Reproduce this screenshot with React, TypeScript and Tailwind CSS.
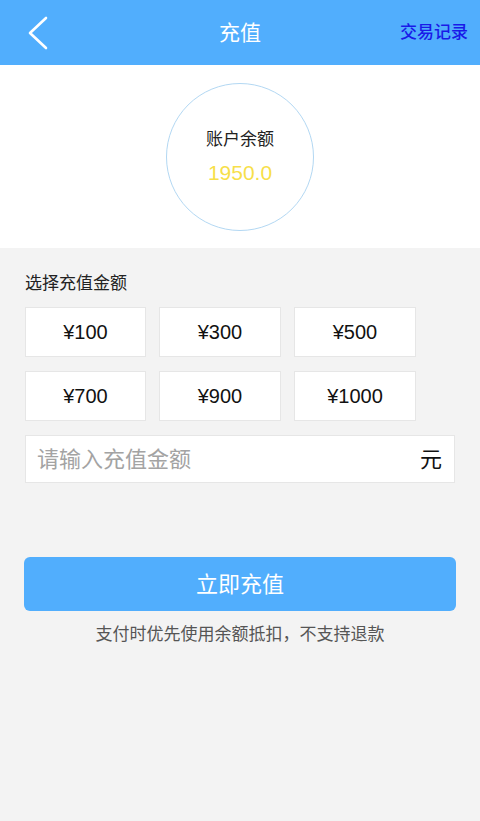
const amounts = ["¥100", "¥300", "¥500", "¥700", "¥900", "¥1000"];

export default function App() {
  const font = { fontFamily: '"Liberation Sans", "Noto Sans CJK SC", sans-serif' };
  return (
    <div className="w-[480px] h-[821px] bg-[#f3f3f3] flex flex-col" style={font}>
      <header className="h-[65px] bg-[#51aefd] grid grid-cols-[minmax(0,1fr)_auto_minmax(0,1fr)] items-center px-[12px]">
        <svg width="22" height="34" viewBox="0 0 22 34" fill="none" className="text-white ml-[15px]">
          <path d="M19 2 L3 17 L19 32" stroke="currentColor" strokeWidth="2.6" strokeLinecap="round" strokeLinejoin="round" />
        </svg>
        <h1 className="text-[21px] text-white">充值</h1>
        <span className="justify-self-end text-[17px] text-[#1a1ae8] font-medium">交易记录</span>
      </header>

      <section className="h-[183px] bg-white flex items-center justify-center">
        <div className="w-[148px] h-[148px] rounded-full border border-[#b3d8f3] flex flex-col items-center justify-center gap-[4px] pt-[2px]">
          <span className="text-[17px] text-[#222]">账户余额</span>
          <span className="text-[21px] text-[#f7df4a]">1950.0</span>
        </div>
      </section>

      <div className="px-[25px] pt-[24px]">
        <p className="text-[17px] text-[#222] leading-[24px]">选择充值金额</p>
        <div className="grid grid-cols-[121px_122px_122px] gap-x-[13px] gap-y-[14px] mt-[11px]">
          {amounts.map((a) => (
            <div
              key={a}
              className="h-[50px] bg-white border border-[#e6e6e6] flex items-center justify-center text-[20px] text-[#111]"
            >
              {a}
            </div>
          ))}
        </div>
        <div className="mt-[14px] h-[48px] bg-white border border-[#e6e6e6] flex items-center justify-between pl-[11px] pr-[12px]">
          <span className="text-[22px] text-[#a3a3a3]">请输入充值金额</span>
          <span className="text-[22px] text-[#111]">元</span>
        </div>
      </div>

      <div className="px-[24px] mt-[74px]">
        <button className="w-full h-[54px] rounded-[6px] bg-[#51aefd] text-white text-[22px]">立即充值</button>
        <p className="text-center text-[17px] text-[#555] mt-[11px]">支付时优先使用余额抵扣，不支持退款</p>
      </div>
    </div>
  );
}
